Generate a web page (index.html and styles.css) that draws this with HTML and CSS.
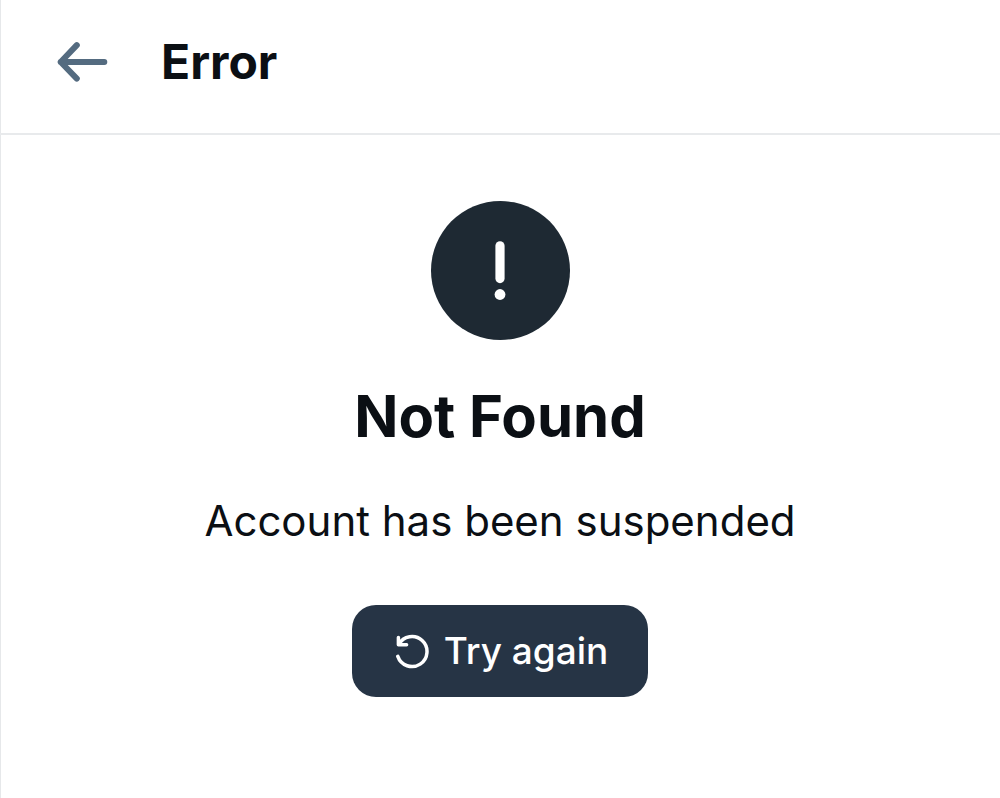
FILE: index.html
```
<!DOCTYPE html>
<html lang="en">
<head>
  <meta charset="UTF-8">
  <meta name="viewport" content="width=device-width, initial-scale=1.0">
  <title>Error</title>
  <link rel="stylesheet" href="styles.css">
</head>
<body>

  <header class="header">
    <button class="back" type="button" aria-label="Go back" onclick="history.back()">
      <svg width="52" height="42" viewBox="0 0 52 42" fill="none" stroke="currentColor" stroke-width="6" stroke-linecap="round" stroke-linejoin="round">
        <path d="M48.3 21H4.7M20.8 4.2L4.7 21L20.8 37.6"/>
      </svg>
    </button>
    <h1 class="title">Error</h1>
  </header>

  <main class="content">
    <div class="badge">
      <svg width="20" height="62" viewBox="0 0 20 62" fill="currentColor">
        <rect x="5.4" y="1.2" width="9.2" height="42" rx="4.6"/>
        <circle cx="10" cy="54.5" r="5.4"/>
      </svg>
    </div>
    <h2 class="heading">Not Found</h2>
    <p class="message">Account has been suspended</p>
    <button class="retry" type="button" onclick="location.reload()">
      <svg width="38" height="38" viewBox="0 0 38 38" fill="none" stroke="currentColor" stroke-width="3.5" stroke-linecap="round" stroke-linejoin="round">
        <path d="M6.4 5.4V12.8H14.6M6.8 12.4A15 15 0 1 1 5.8 24.4"/>
      </svg>
      <span>Try again</span>
    </button>
  </main>

</body>
</html>
```
FILE: styles.css
```
* {
  box-sizing: border-box;
}

body {
  margin: 0;
  min-height: 100vh;
  box-shadow: inset 1px 0 #e6e8ea;
  background: #fff;
  color: #0b0f14;
  font-family: Inter, "Liberation Sans", sans-serif;
}

h1, h2, p {
  margin: 0;
}

button {
  border: none;
  font-family: inherit;
  cursor: pointer;
}

svg {
  display: block;
}

.header {
  display: flex;
  align-items: center;
  gap: 53px;
  padding: 32px 56px 41px;
  border-bottom: 2px solid #e8eaec;
}

.back {
  padding: 0;
  background: none;
  color: #546b80;
}

.title {
  font-size: 48px;
  font-weight: 700;
  line-height: 60px;
}

.content {
  display: flex;
  flex-direction: column;
  align-items: center;
  padding: 66px 32px;
}

.badge {
  display: flex;
  align-items: center;
  justify-content: center;
  width: 139px;
  height: 139px;
  border-radius: 50%;
  background: #1e2933;
  color: #fff;
}

.heading {
  margin-top: 40px;
  font-size: 58px;
  font-weight: 700;
  line-height: 72px;
}

.message {
  margin-top: 39px;
  font-size: 42px;
  line-height: 60px;
}

.retry {
  display: flex;
  align-items: center;
  gap: 14px;
  margin-top: 54px;
  padding: 16px 40px;
  border-radius: 24px;
  background: #263445;
  color: #fff;
  font-size: 37px;
  font-weight: 500;
  line-height: 60px;
}
```
